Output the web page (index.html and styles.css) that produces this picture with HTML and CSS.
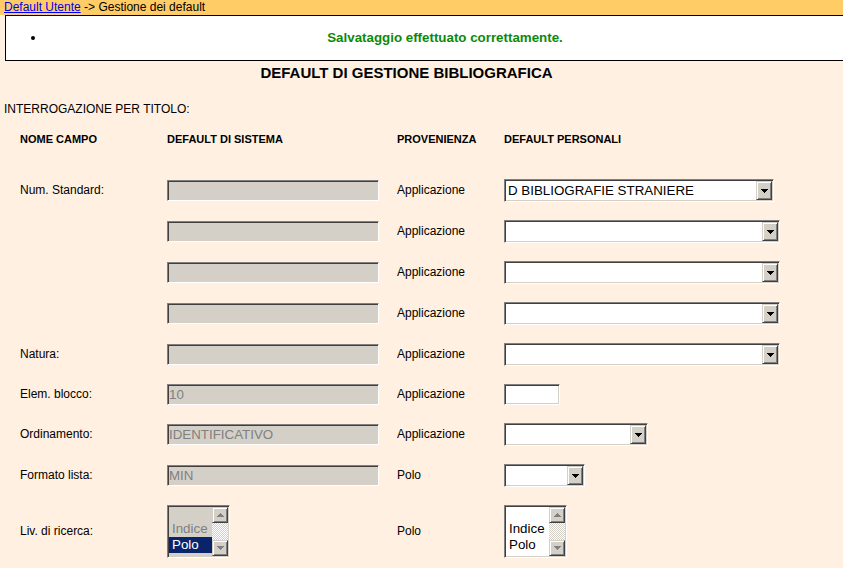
FILE: index.html
```html
<!DOCTYPE html>
<html lang="it">
<head>
<meta charset="utf-8">
<title>Gestione dei default</title>
<link rel="stylesheet" href="styles.css">
</head>
<body>
<div class="topbar"><a href="#">Default Utente</a> -&gt; Gestione dei default</div>
<div class="msgbox"><ul><li><span class="ok">Salvataggio effettuato correttamente.</span></li></ul></div>
<h1 class="title">DEFAULT DI GESTIONE BIBLIOGRAFICA</h1>
<div class="section">INTERROGAZIONE PER TITOLO:</div>
<div class="form">
  <div class="row head"><div>NOME CAMPO</div><div>DEFAULT DI SISTEMA</div><div>PROVENIENZA</div><div>DEFAULT PERSONALI</div></div>

  <div class="row">
    <div>Num. Standard:</div>
    <div><input class="field sys" type="text" disabled></div>
    <div>Applicazione</div>
    <div><div class="select w270"><span class="val">D BIBLIOGRAFIE STRANIERE</span><span class="drop"><svg width="7" height="4" viewBox="0 0 7 4" shape-rendering="crispEdges"><rect x="0" y="0" width="7" height="1"/><rect x="1" y="1" width="5" height="1"/><rect x="2" y="2" width="3" height="1"/><rect x="3" y="3" width="1" height="1"/></svg></span></div></div>
  </div>

  <div class="row">
    <div></div>
    <div><input class="field sys" type="text" disabled></div>
    <div>Applicazione</div>
    <div><div class="select w276"><span class="val"></span><span class="drop"><svg width="7" height="4" viewBox="0 0 7 4" shape-rendering="crispEdges"><rect x="0" y="0" width="7" height="1"/><rect x="1" y="1" width="5" height="1"/><rect x="2" y="2" width="3" height="1"/><rect x="3" y="3" width="1" height="1"/></svg></span></div></div>
  </div>

  <div class="row">
    <div></div>
    <div><input class="field sys" type="text" disabled></div>
    <div>Applicazione</div>
    <div><div class="select w276"><span class="val"></span><span class="drop"><svg width="7" height="4" viewBox="0 0 7 4" shape-rendering="crispEdges"><rect x="0" y="0" width="7" height="1"/><rect x="1" y="1" width="5" height="1"/><rect x="2" y="2" width="3" height="1"/><rect x="3" y="3" width="1" height="1"/></svg></span></div></div>
  </div>

  <div class="row">
    <div></div>
    <div><input class="field sys" type="text" disabled></div>
    <div>Applicazione</div>
    <div><div class="select w276"><span class="val"></span><span class="drop"><svg width="7" height="4" viewBox="0 0 7 4" shape-rendering="crispEdges"><rect x="0" y="0" width="7" height="1"/><rect x="1" y="1" width="5" height="1"/><rect x="2" y="2" width="3" height="1"/><rect x="3" y="3" width="1" height="1"/></svg></span></div></div>
  </div>

  <div class="row">
    <div>Natura:</div>
    <div><input class="field sys" type="text" disabled></div>
    <div>Applicazione</div>
    <div><div class="select w276"><span class="val"></span><span class="drop"><svg width="7" height="4" viewBox="0 0 7 4" shape-rendering="crispEdges"><rect x="0" y="0" width="7" height="1"/><rect x="1" y="1" width="5" height="1"/><rect x="2" y="2" width="3" height="1"/><rect x="3" y="3" width="1" height="1"/></svg></span></div></div>
  </div>

  <div class="row">
    <div>Elem. blocco:</div>
    <div><input class="field sys" type="text" value="10" disabled></div>
    <div>Applicazione</div>
    <div><input class="field small" type="text"></div>
  </div>

  <div class="row">
    <div>Ordinamento:</div>
    <div><input class="field sys" type="text" value="IDENTIFICATIVO" disabled></div>
    <div>Applicazione</div>
    <div><div class="select w144"><span class="val"></span><span class="drop"><svg width="7" height="4" viewBox="0 0 7 4" shape-rendering="crispEdges"><rect x="0" y="0" width="7" height="1"/><rect x="1" y="1" width="5" height="1"/><rect x="2" y="2" width="3" height="1"/><rect x="3" y="3" width="1" height="1"/></svg></span></div></div>
  </div>

  <div class="row">
    <div>Formato lista:</div>
    <div><input class="field sys" type="text" value="MIN" disabled></div>
    <div>Polo</div>
    <div><div class="select w81"><span class="val"></span><span class="drop"><svg width="7" height="4" viewBox="0 0 7 4" shape-rendering="crispEdges"><rect x="0" y="0" width="7" height="1"/><rect x="1" y="1" width="5" height="1"/><rect x="2" y="2" width="3" height="1"/><rect x="3" y="3" width="1" height="1"/></svg></span></div></div>
  </div>

  <div class="row">
    <div>Liv. di ricerca:</div>
    <div>
      <div class="listbox disabled">
        <div class="items"><div class="opt">Indice</div><div class="opt sel">Polo</div></div>
        <div class="scroll">
          <span class="sbtn"><svg width="7" height="4" viewBox="0 0 7 4" shape-rendering="crispEdges"><rect x="3" y="0" width="1" height="1"/><rect x="2" y="1" width="3" height="1"/><rect x="1" y="2" width="5" height="1"/><rect x="0" y="3" width="7" height="1"/></svg></span>
          <span class="track"></span>
          <span class="sbtn"><svg width="7" height="4" viewBox="0 0 7 4" shape-rendering="crispEdges"><rect x="0" y="0" width="7" height="1"/><rect x="1" y="1" width="5" height="1"/><rect x="2" y="2" width="3" height="1"/><rect x="3" y="3" width="1" height="1"/></svg></span>
        </div>
      </div>
    </div>
    <div>Polo</div>
    <div>
      <div class="listbox">
        <div class="items"><div class="opt">Indice</div><div class="opt">Polo</div></div>
        <div class="scroll">
          <span class="sbtn"><svg width="7" height="4" viewBox="0 0 7 4" shape-rendering="crispEdges"><rect x="3" y="0" width="1" height="1"/><rect x="2" y="1" width="3" height="1"/><rect x="1" y="2" width="5" height="1"/><rect x="0" y="3" width="7" height="1"/></svg></span>
          <span class="track"></span>
          <span class="sbtn"><svg width="7" height="4" viewBox="0 0 7 4" shape-rendering="crispEdges"><rect x="0" y="0" width="7" height="1"/><rect x="1" y="1" width="5" height="1"/><rect x="2" y="2" width="3" height="1"/><rect x="3" y="3" width="1" height="1"/></svg></span>
        </div>
      </div>
    </div>
  </div>
</div>
</body>
</html>
```
FILE: styles.css
```css
html { overflow: hidden; }
body {
  margin: 0;
  background: #fff0e1;
  color: #000;
  font-family: "Liberation Sans", Arial, sans-serif;
  font-size: 12px;
}
.topbar {
  height: 15px;
  line-height: 15px;
  padding-left: 4px;
  background: #ffcc66;
  white-space: nowrap;
}
.topbar a { color: #0000ee; text-decoration: underline; }

.msgbox {
  margin-left: 5px;
  width: 840px;
  box-sizing: border-box;
  border: 1px solid #000;
  background: #fff;
}
.msgbox ul {
  margin: 0;
  padding: 14px 0 14px 40px;
}
.msgbox li {
  text-align: center;
  font-size: 13.333px;
  font-weight: bold;
  line-height: 16px;
}
.ok { color: #0a8a0a; }

.title {
  margin: 3px 0 0;
  padding-right: 30px;
  font-size: 15px;
  line-height: 18px;
  font-weight: bold;
  text-align: center;
}
.section {
  margin-top: 20px;
  padding-left: 4px;
  line-height: 15px;
}

.form { margin-top: 6px; padding-left: 20px; }
.row {
  display: grid;
  grid-template-columns: 147px 230px 107px 1fr;
  align-items: center;
  padding: 9px 0;
  line-height: 15px;
}
.row.head {
  padding-bottom: 23px;
  font-size: 11px;
  font-weight: bold;
}

.field {
  display: block;
  box-sizing: border-box;
  height: 21px;
  margin: 0;
  padding: 0 1px;
  border: 1px solid;
  border-color: #808080 #fff #fff #808080;
  box-shadow: inset 1px 1px 0 #404040, inset -1px -1px 0 #d4d0c8;
  background: #fff;
  font-family: "Liberation Sans", Arial, sans-serif;
  font-size: 13.333px;
  color: #000;
  outline: none;
}
.field.sys {
  width: 212px;
  background: #d4d0c8;
  color: #808080;
  -webkit-text-fill-color: #808080;
  opacity: 1;
}
.field.small { width: 56px; }

.select {
  display: flex;
  box-sizing: border-box;
  height: 23px;
  padding: 1px;
  border: 1px solid;
  border-color: #808080 #fff #fff #808080;
  box-shadow: inset 1px 1px 0 #404040, inset -1px -1px 0 #d4d0c8;
  background: #fff;
  font-size: 13.333px;
}
.w270 { width: 270px; }
.w276 { width: 276px; }
.w144 { width: 144px; }
.w81 { width: 81px; }
.select .val {
  flex: 1;
  padding-left: 2px;
  line-height: 19px;
  white-space: nowrap;
  overflow: hidden;
}
.drop, .sbtn {
  display: flex;
  align-items: center;
  justify-content: center;
  box-sizing: border-box;
  width: 16px;
  border: 1px solid;
  border-color: #d4d0c8 #404040 #404040 #d4d0c8;
  box-shadow: inset 1px 1px 0 #fff, inset -1px -1px 0 #808080;
  background: #d4d0c8;
}
.drop svg { fill: #000; }
.sbtn { height: 16px; flex: none; }
.sbtn svg { fill: #808080; }

.listbox {
  display: flex;
  box-sizing: border-box;
  width: 63px;
  height: 53px;
  padding: 1px;
  border: 1px solid;
  border-color: #808080 #fff #fff #808080;
  box-shadow: inset 1px 1px 0 #404040, inset -1px -1px 0 #d4d0c8;
  background: #fff;
  font-size: 13.333px;
}
.listbox.disabled { background: #d4d0c8; }
.items {
  flex: 1;
  padding-top: 14px;
  overflow: hidden;
}
.opt {
  line-height: 16px;
  padding-left: 3px;
  white-space: nowrap;
}
.listbox.disabled .opt { color: #808080; }
.listbox.disabled .opt.sel { background: #0a246a; color: #fff; }
.scroll {
  display: flex;
  flex-direction: column;
  width: 16px;
}
.track {
  flex: 1;
  background: repeating-conic-gradient(#fff 0 25%, #d4d0c8 0 50%) 0 0 / 2px 2px;
}
```
